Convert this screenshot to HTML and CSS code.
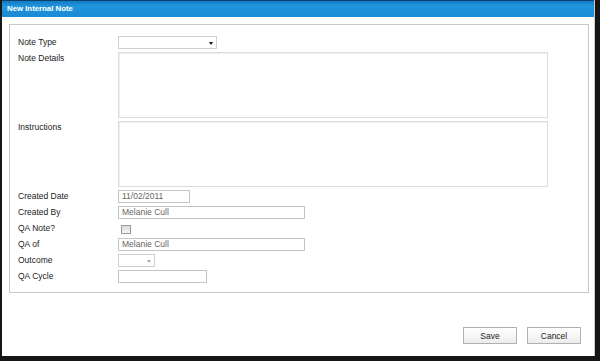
FILE: index.html
```html
<!DOCTYPE html>
<html lang="en">
<head>
    <meta charset="UTF-8">
    <title>New Internal Note</title>
    <link rel="stylesheet" href="styles.css">
</head>
<body>

<div class="dialog">
    <div class="titlebar">New Internal Note</div>
    <div class="content">
        <div class="fieldset">
            <label class="label">Note Type</label>
            <div class="select select-type"><span class="caret"></span></div>

            <label class="label">Note Details</label>
            <div class="textarea"></div>

            <label class="label">Instructions</label>
            <div class="textarea"></div>

            <label class="label">Created Date</label>
            <div class="input input-date">11/02/2011</div>

            <label class="label">Created By</label>
            <div class="input input-wide">Melanie Cull</div>

            <label class="label">QA Note?</label>
            <div class="check-cell"><span class="checkbox"></span></div>

            <label class="label">QA of</label>
            <div class="input input-wide">Melanie Cull</div>

            <label class="label">Outcome</label>
            <div class="select select-outcome"><span class="caret caret-light"></span></div>

            <label class="label">QA Cycle</label>
            <div class="input input-cycle"></div>
        </div>
    </div>
    <div class="buttons">
        <button class="btn">Save</button>
        <button class="btn">Cancel</button>
    </div>
</div>

</body>
</html>
```

FILE: styles.css
```css
body, html {
    margin: 0;
    height: 100%;
    overflow: hidden;
    background-color: #161616;
    font-family: "Liberation Sans", Arial, sans-serif;
    font-size: 8.5px;
    color: #222;
}

.dialog {
    width: 592px;
    height: 356px;
    margin-left: 2px;
    background-color: #fff;
    border-right: 1px solid #c9c9c9;
    display: flex;
    flex-direction: column;
}

.titlebar {
    height: 17px;
    line-height: 16px;
    padding-left: 5px;
    background: linear-gradient(#1479c2, #2095dc 30%, #1a8ad4);
    border-top: 1px solid #0b3f6e;
    box-sizing: border-box;
    color: #fff;
    font-weight: bold;
    font-size: 7.8px;
}

.content {
    padding: 7px 5px 0 7px;
}

.fieldset {
    height: 269px;
    box-sizing: border-box;
    border: 1px solid #c8c8c8;
    padding: 11px 8px 0 8px;
    display: grid;
    grid-template-columns: 100px 1fr;
    grid-template-rows: 13px 66px 66px repeat(6, 13px);
    row-gap: 3px;
    align-content: start;
}

.label {
    line-height: 13px;
    white-space: nowrap;
}

.input, .select, .textarea {
    box-sizing: border-box;
    border: 1px solid #c4c4c4;
    background-color: #fff;
}

.input {
    height: 13px;
    line-height: 11px;
    padding-left: 3px;
    color: #666;
}

.input-date {
    width: 72px;
}

.input-wide {
    width: 187px;
}

.input-cycle {
    width: 89px;
}

.textarea {
    width: 430px;
    height: 66px;
    border-color: #dcdcdc;
    box-shadow: inset 1px 1px 1px #eee;
}

.select {
    height: 13px;
    position: relative;
    border-color: #d0d0d0;
}

.select-type {
    width: 99px;
}

.select-outcome {
    width: 37px;
}

.caret {
    position: absolute;
    right: 3px;
    top: 5px;
    border-left: 2.5px solid transparent;
    border-right: 2.5px solid transparent;
    border-top: 3px solid #111;
}

.caret-light {
    border-top-color: #aaa;
}

.check-cell {
    padding: 3px 0 0 3px;
}

.checkbox {
    display: block;
    width: 10px;
    height: 9px;
    box-sizing: border-box;
    border: 1px solid #9a9a9a;
    background: linear-gradient(#dcdcdc, #f4f4f4);
}

.buttons {
    display: flex;
    justify-content: flex-end;
    gap: 10px;
    padding: 34px 13px 0 0;
}

.btn {
    width: 54px;
    height: 17px;
    padding: 0;
    border: 1px solid #b0b0b0;
    background: linear-gradient(#fff, #ececec);
    font-family: "Liberation Sans", Arial, sans-serif;
    font-size: 8.5px;
    color: #222;
}
```
